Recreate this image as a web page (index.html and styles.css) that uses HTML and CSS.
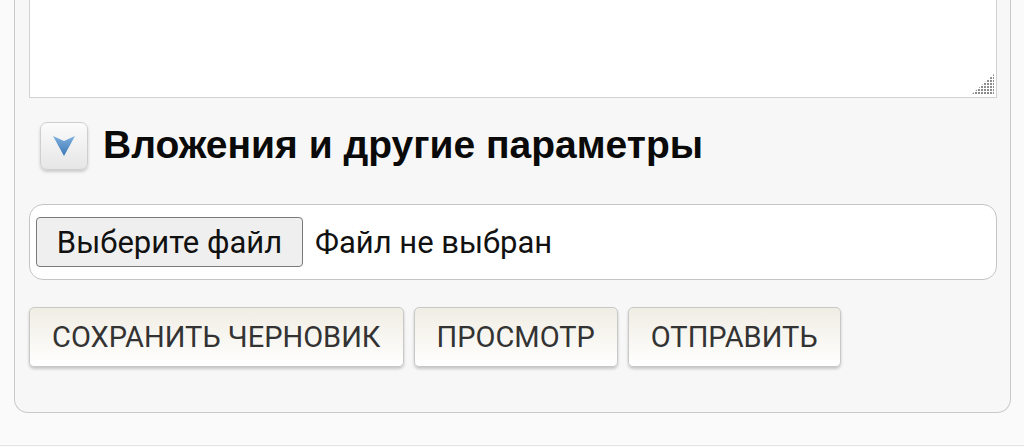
FILE: index.html
```html
<!DOCTYPE html>
<html lang="ru">
<head>
<meta charset="utf-8">
<link rel="stylesheet" href="styles.css">
</head>
<body>
<div class="page">
  <form class="panel">
    <div class="textarea">
      <svg class="grip" width="22" height="20" viewBox="0 0 22 20">
        <defs>
          <pattern id="dots" width="3" height="3" patternUnits="userSpaceOnUse">
            <rect x="0" y="0" width="2" height="2" fill="#8c8c8c"/>
          </pattern>
        </defs>
        <polygon points="22,0 22,20 0,20" fill="url(#dots)"/>
      </svg>
    </div>
    <div class="section-head">
      <button type="button" class="toggle">
        <svg width="22" height="20" viewBox="0 0 22 20">
          <defs>
            <linearGradient id="tri" x1="0" y1="0" x2="0" y2="1">
              <stop offset="0" stop-color="#7fb0de"/>
              <stop offset="1" stop-color="#3c78b4"/>
            </linearGradient>
          </defs>
          <polygon points="0,0 11,5 22,0 11,20" fill="url(#tri)"/>
        </svg>
      </button>
      <h2 class="section-title">Вложения и другие параметры</h2>
    </div>
    <div class="filebox">
      <span class="file-btn">Выберите файл</span>
      <span class="file-name">Файл не выбран</span>
    </div>
    <div class="actions">
      <button type="button" class="btn">СОХРАНИТЬ ЧЕРНОВИК</button>
      <button type="button" class="btn">ПРОСМОТР</button>
      <button type="button" class="btn">ОТПРАВИТЬ</button>
    </div>
  </form>
  <div class="footer-line"></div>
</div>
</body>
</html>
```

FILE: styles.css
```css
html, body {
  margin: 0;
  padding: 0;
  background: #fafafa;
  font-family: Roboto, "Noto Sans", Arial, sans-serif;
}

.page {
  width: 1024px;
  height: 447px;
  overflow: hidden;
}

.panel {
  margin-left: 14px;
  width: 997px;
  box-sizing: border-box;
  height: 413px;
  background: #f7f7f7;
  border: 1px solid #c9c9c9;
  border-top: none;
  border-radius: 0 0 14px 14px;
  padding: 0 13px 0 14px;
  display: flex;
  flex-direction: column;
}

.textarea {
  position: relative;
  height: 98px;
  background: #fff;
  border: 1px solid #d2d2d2;
  border-top: none;
  box-sizing: border-box;
}

.grip {
  position: absolute;
  right: 2px;
  bottom: 3px;
}

.section-head {
  display: flex;
  align-items: center;
  margin-top: 23px;
  margin-left: 11px;
  height: 50px;
}

.toggle {
  width: 48px;
  height: 48px;
  box-sizing: border-box;
  border: 1px solid #cfcfcf;
  border-radius: 7px;
  background: linear-gradient(#fbfbfb, #e6e6e6);
  box-shadow: 0 2px 3px rgba(0,0,0,0.18);
  display: flex;
  align-items: center;
  justify-content: center;
  padding: 0;
  margin: 0;
}

.section-title {
  margin: 0 0 0 15px;
  font-family: "Liberation Sans", Arial, sans-serif;
  font-weight: bold;
  font-size: 39px;
  color: #0a0a0a;
  letter-spacing: 0;
  padding-bottom: 2px;
}

.filebox {
  margin-top: 33px;
  height: 76px;
  box-sizing: border-box;
  background: #fff;
  border: 1.5px solid #c4c4c4;
  border-radius: 14px;
  display: flex;
  align-items: center;
  padding-left: 6px;
}

.file-btn {
  display: inline-flex;
  align-items: center;
  justify-content: center;
  width: 267px;
  height: 50px;
  box-sizing: border-box;
  background: #efefef;
  border: 1.5px solid #7a7a7a;
  border-radius: 4px;
  font-size: 31px;
  color: #111;
}

.file-name {
  margin-left: 12px;
  font-size: 31px;
  color: #111;
}

.actions {
  display: flex;
  gap: 10px;
  margin-top: 27px;
}

.btn {
  height: 60px;
  padding: 0 22px;
  box-sizing: border-box;
  border: 1px solid #c8c8c8;
  border-radius: 5px;
  background: linear-gradient(#f0ede3, #ffffff);
  box-shadow: 0 2px 3px rgba(0,0,0,0.2);
  font-family: Roboto, Arial, sans-serif;
  font-size: 29px;
  color: #333;
  margin: 0;
}

.footer-line {
  margin-top: 32px;
  height: 1px;
  background: #e4e4e4;
}
```
